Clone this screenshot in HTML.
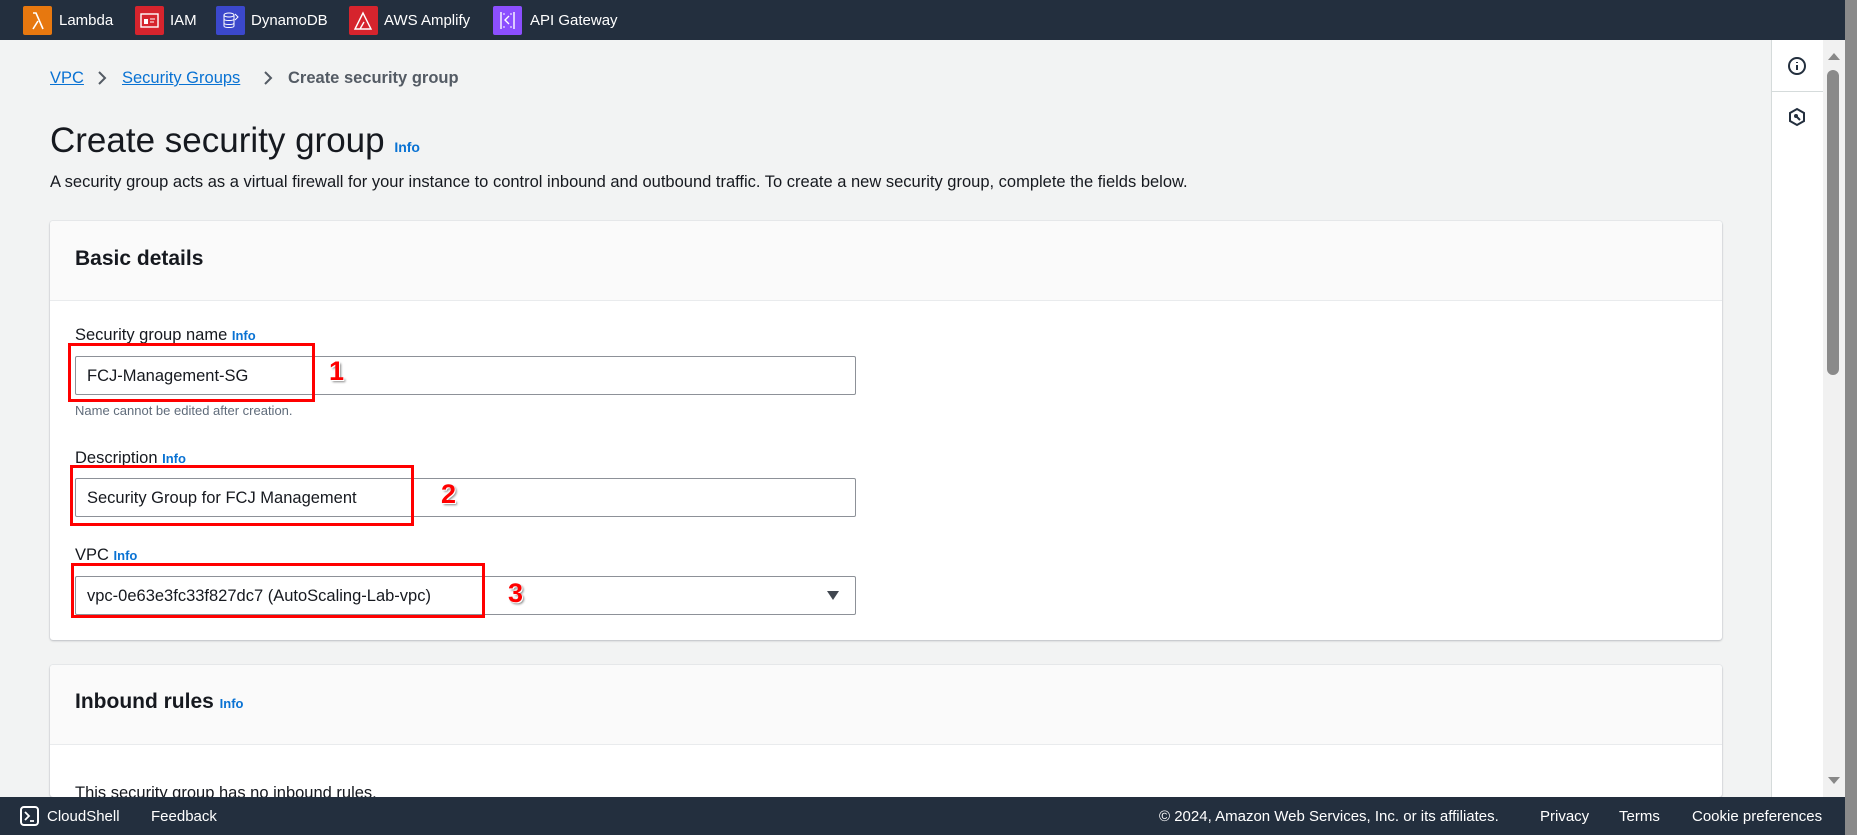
<!DOCTYPE html>
<html style="width:1860px;height:835px;overflow:hidden"><head><meta charset="utf-8"><style>
*{box-sizing:border-box;margin:0;padding:0}
body{width:1860px;height:835px;overflow:hidden;background:#f2f3f3;font-family:"Liberation Sans",sans-serif;color:#16191f;position:relative}
.a{position:absolute;white-space:nowrap}
.nav{left:0;top:0;width:1860px;height:40px;background:#232f3e}
.ic{width:29px;height:29px;top:6px;border-radius:2px}
.nt{top:12px;color:#fff;font-size:15px}
.link{color:#0972d3;text-decoration:underline}
.info{color:#0972d3;font-weight:bold;font-size:13px}
.panel{background:#fff;border-radius:3px;box-shadow:0 1px 2px rgba(0,7,22,.2),0 0 0 1px #e9ebed}
.ph{background:#fafafa;border-bottom:1px solid #e9ebed}
.inp{background:#fff;border:1px solid #8d9198;border-radius:2px;height:39px;font-size:16.5px;padding:10px 11px}
.lbl{font-size:16.5px}
.red{border:3px solid #f00}
.num{color:#f00;font-weight:bold;font-size:27px;text-shadow:1px 1px 0 #fff,2px 2px 2px #888}
.foot{left:0;top:797px;width:1845px;height:38px;background:#232f3e;color:#fff;font-size:15px}
</style></head><body>
<div class="a nav"></div>
<div class="a ic" style="left:23px;background:#e7780f"><svg width="29" height="29"><path d="M10 7h3l7 16M15 15l-5 8" stroke="#fff" stroke-width="1.6" fill="none"/></svg></div>
<div class="a nt" style="left:59px">Lambda</div>
<div class="a ic" style="left:135px;background:#d6242d"><svg width="29" height="29"><rect x="6" y="8" width="17" height="13" stroke="#fff" stroke-width="1.4" fill="none"/><rect x="9" y="13" width="4" height="5" fill="#fff"/><path d="M15 13h5M15 16h4" stroke="#fff"/></svg></div>
<div class="a nt" style="left:170px">IAM</div>
<div class="a ic" style="left:216px;background:#3b48cc"><svg width="29" height="29"><ellipse cx="13" cy="9" rx="5" ry="2" stroke="#fff" fill="none"/><path d="M8 9v11c0 2 10 2 10 0V9M8 13c0 2 10 2 10 0M8 17c0 2 10 2 10 0M19 8l3 3-3 3" stroke="#fff" fill="none"/></svg></div>
<div class="a nt" style="left:251px">DynamoDB</div>
<div class="a ic" style="left:349px;background:#d6242d"><svg width="29" height="29"><path d="M6 23L14 7l8 16zM11 23l4-7" stroke="#fff" stroke-width="1.4" fill="none"/></svg></div>
<div class="a nt" style="left:384px">AWS Amplify</div>
<div class="a ic" style="left:493px;background:#8c4fff"><svg width="29" height="29"><path d="M8 6v17M21 6v17M16 10l-4 4 4 4" stroke="#fff" stroke-width="1.4" fill="none"/><path d="M11 7v2M11 20v2M18 7v2M18 20v2" stroke="#fff"/></svg></div>
<div class="a nt" style="left:530px">API Gateway</div>

<div class="a" style="left:50px;top:69px;font-size:16.5px"><span class="link">VPC</span></div>
<svg class="a" style="left:96px;top:70px" width="12" height="16"><path d="M3 2l6 6-6 6" stroke="#545b64" stroke-width="2" fill="none"/></svg>
<div class="a" style="left:122px;top:69px;font-size:16.5px"><span class="link">Security Groups</span></div>
<svg class="a" style="left:262px;top:70px" width="12" height="16"><path d="M3 2l6 6-6 6" stroke="#545b64" stroke-width="2" fill="none"/></svg>
<div class="a" style="left:288px;top:69px;font-size:16.5px;font-weight:bold;color:#545b64">Create security group</div>
<div class="a" style="left:50px;top:121px;font-size:35px">Create security group <span class="info" style="font-size:14px">Info</span></div>
<div class="a" style="left:50px;top:173px;font-size:16.5px;color:#16191f">A security group acts as a virtual firewall for your instance to control inbound and outbound traffic. To create a new security group, complete the fields below.</div>

<div class="a panel" style="left:50px;top:221px;width:1672px;height:419px;overflow:hidden">
<div class="ph" style="height:80px"></div></div>
<div class="a" style="left:75px;top:247px;font-size:21px;font-weight:bold">Basic details</div>
<div class="a lbl" style="left:75px;top:326px">Security group name <span class="info">Info</span></div>
<div class="a inp" style="left:75px;top:356px;width:781px">FCJ-Management-SG</div>
<div class="a" style="left:75px;top:403px;font-size:13px;color:#5f6b7a">Name cannot be edited after creation.</div>
<div class="a lbl" style="left:75px;top:449px">Description <span class="info">Info</span></div>
<div class="a inp" style="left:75px;top:478px;width:781px">Security Group for FCJ Management</div>
<div class="a lbl" style="left:75px;top:546px">VPC <span class="info">Info</span></div>
<div class="a inp" style="left:75px;top:576px;width:781px">vpc-0e63e3fc33f827dc7 (AutoScaling-Lab-vpc)</div>
<svg class="a" style="left:826px;top:589px" width="14" height="12"><path d="M1 2h12L7 11z" fill="#414750"/></svg>

<div class="a red" style="left:68px;top:343px;width:247px;height:59px"></div>
<div class="a red" style="left:70px;top:465px;width:344px;height:61px"></div>
<div class="a red" style="left:71px;top:563px;width:414px;height:55px"></div>
<div class="a num" style="left:329px;top:356px">1</div>
<div class="a num" style="left:441px;top:479px">2</div>
<div class="a num" style="left:508px;top:578px">3</div>

<div class="a panel" style="left:50px;top:665px;width:1672px;height:132px;overflow:hidden">
<div class="ph" style="height:80px"></div></div>
<div class="a" style="left:75px;top:690px;font-size:21px;font-weight:bold">Inbound rules <span class="info">Info</span></div>
<div class="a" style="left:75px;top:784px;font-size:16.5px">This security group has no inbound rules.</div>

<div class="a" style="left:1771px;top:40px;width:52px;height:757px;background:#fff;border-left:1px solid #d5dbdb"></div>
<div class="a" style="left:1772px;top:91px;width:51px;height:1px;background:#d5dbdb"></div>
<svg class="a" style="left:1787px;top:56px" width="20" height="20"><circle cx="10" cy="10" r="8" stroke="#232f3e" stroke-width="2" fill="none"/><path d="M10 9v5M10 6v1" stroke="#232f3e" stroke-width="2"/></svg>
<svg class="a" style="left:1787px;top:107px" width="20" height="20"><path d="M10 2l7 4v8l-7 4-7-4V6z" stroke="#232f3e" stroke-width="2" fill="none"/><circle cx="9" cy="9" r="2" fill="#232f3e"/><path d="M10 10l3 3" stroke="#232f3e" stroke-width="2"/></svg>
<div class="a" style="left:1823px;top:40px;width:22px;height:795px;background:#f1f1f1"></div>
<svg class="a" style="left:1826px;top:51px" width="16" height="10"><path d="M2 9h12L8 2z" fill="#888"/></svg>
<div class="a" style="left:1827px;top:70px;width:12px;height:305px;background:#8a8a8a;border-radius:6px"></div>
<svg class="a" style="left:1826px;top:776px" width="16" height="10"><path d="M2 1h12L8 8z" fill="#888"/></svg>
<div class="a" style="left:1845px;top:0;width:12px;height:835px;background:#8a8a8a"></div>
<div class="a" style="left:1857px;top:0;width:3px;height:835px;background:#fff"></div>

<div class="a foot"></div>
<svg class="a" style="left:20px;top:806px" width="19" height="20"><rect x="1" y="1" width="17" height="18" rx="3" stroke="#fff" stroke-width="2" fill="none"/><path d="M5 6l4 4-4 4M10 15h4" stroke="#fff" stroke-width="1.8" fill="none"/></svg>
<div class="a" style="left:47px;top:808px;color:#fff;font-size:15px">CloudShell</div>
<div class="a" style="left:151px;top:808px;color:#fff;font-size:15px">Feedback</div>
<div class="a" style="left:1159px;top:808px;color:#fff;font-size:15px">© 2024, Amazon Web Services, Inc. or its affiliates.</div>
<div class="a" style="left:1540px;top:808px;color:#fff;font-size:15px">Privacy</div>
<div class="a" style="left:1619px;top:808px;color:#fff;font-size:15px">Terms</div>
<div class="a" style="left:1692px;top:808px;color:#fff;font-size:15px">Cookie preferences</div>
</body></html>
